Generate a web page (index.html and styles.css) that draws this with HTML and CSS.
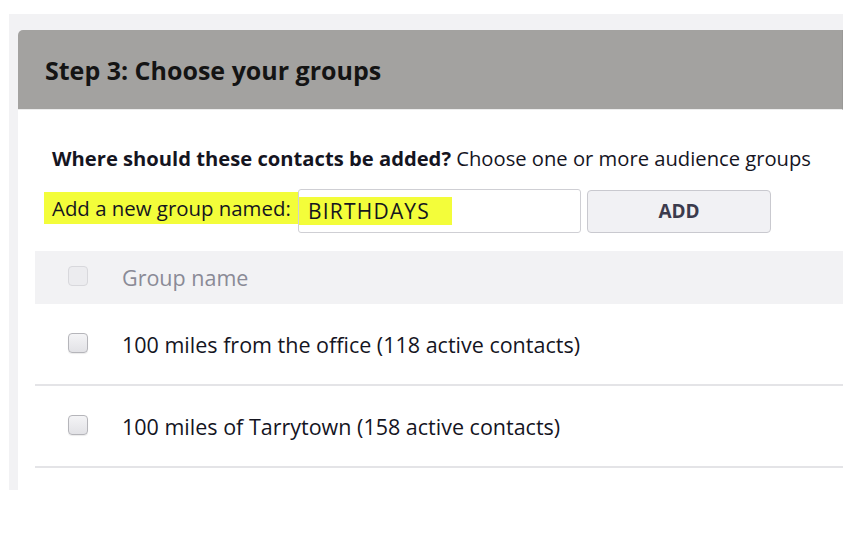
FILE: index.html
```html
<!DOCTYPE html>
<html>
<head>
<meta charset="utf-8">
<link rel="stylesheet" href="styles.css">
</head>
<body>
<div class="frame">
  <div class="card">
    <div class="card-head">
      <h2 class="title">Step 3: Choose your groups</h2>
    </div>
    <div class="card-body">
      <p class="prompt"><strong>Where should these contacts be added?</strong> Choose one or more audience groups</p>
      <div class="add-row">
        <span class="label"><span class="mark mark-label">Add a new group named:</span></span>
        <div class="field"><span class="mark mark-field">BIRTHDAYS</span></div>
        <button class="btn">ADD</button>
      </div>
      <div class="table">
        <div class="row head">
          <span class="cb cb-disabled"></span>
          <span class="cell head-text">Group name</span>
        </div>
        <div class="row">
          <span class="cb"></span>
          <span class="cell">100 miles from the office (118 active contacts)</span>
        </div>
        <div class="row">
          <span class="cb"></span>
          <span class="cell">100 miles of Tarrytown (158 active contacts)</span>
        </div>
      </div>
    </div>
  </div>
</div>
</body>
</html>
```
FILE: styles.css
```css
html, body {
  margin: 0;
  padding: 0;
  background: #ffffff;
}
body {
  font-family: "Open Sans", Lato, sans-serif;
  color: #15151f;
}
.frame {
  margin: 14px 0 0 9px;
  width: 834px;
  height: 476px;
  box-sizing: border-box;
  padding: 16px 0 0 9px;
  background: #f2f2f4;
  overflow: hidden;
}
.card {
  background: #ffffff;
  height: 100%;
  border-top-left-radius: 5px;
  overflow: hidden;
}
.card-head {
  height: 80px;
  box-sizing: border-box;
  background: #a3a2a0;
  border-right: 1px solid #9a9997;
  border-bottom: 1px solid #ececec;
  display: flex;
  align-items: center;
  padding-left: 27px;
}
.title {
  margin: 0;
  font-size: 25px;
  font-weight: 700;
  color: #141414;
}
.card-body {
  padding: 36px 0 0 17px;
}
.prompt {
  margin: 0 0 0 17px;
  font-size: 20.2px;
  line-height: 24px;
  white-space: nowrap;
}
.prompt strong {
  font-weight: 700;
}
.add-row {
  display: flex;
  align-items: center;
  margin-top: 19px;
  margin-left: 9px;
  height: 44px;
}
.label {
  width: 254px;
  font-size: 20.4px;
  white-space: nowrap;
}
.mark {
  background: #f3fd3a;
}
.mark-label {
  display: block;
  height: 32px;
  line-height: 33px;
  padding-left: 8px;
  margin-bottom: 7px;
}
.field {
  width: 283px;
  height: 44px;
  box-sizing: border-box;
  border: 1px solid #cfcfd4;
  border-radius: 3px;
  background: #fff;
  display: flex;
  align-items: center;
  font-size: 21px;
  letter-spacing: 1.2px;
}
.mark-field {
  display: inline-block;
  height: 28px;
  line-height: 28px;
  padding: 0 22px 0 9px;
}
.btn {
  margin-left: 6px;
  width: 184px;
  height: 43px;
  border: 1px solid #c9c9cf;
  border-radius: 4px;
  background: #f1f1f4;
  font-family: inherit;
  font-weight: 700;
  font-size: 19px;
  color: #3b3b4d;
}
.table {
  margin-top: 18px;
}
.row {
  display: flex;
  align-items: center;
  height: 82px;
  box-sizing: border-box;
  border-bottom: 2px solid #e4e4e7;
  padding-left: 33px;
}
.row.head {
  height: 53px;
  background: #f2f2f4;
  border-bottom: none;
}
.cb {
  width: 20px;
  height: 20px;
  box-sizing: border-box;
  border: 1px solid #b5b5ba;
  border-radius: 4px;
  background: linear-gradient(#f4f4f6, #e2e2e6);
  box-shadow: 0 1px 1px rgba(0,0,0,0.08);
  flex: none;
  margin-bottom: 3px;
}
.cb-disabled {
  border-color: #d8d8dc;
  background: #ececef;
  box-shadow: none;
}
.cell {
  margin-left: 34px;
  font-size: 21.5px;
  white-space: nowrap;
}
.head-text {
  color: #8a8a96;
}
```
